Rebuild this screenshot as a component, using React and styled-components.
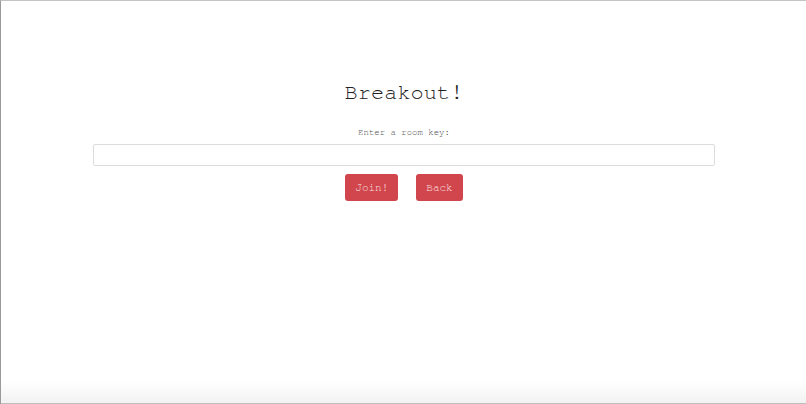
import React from 'react';
import styled, { createGlobalStyle } from 'styled-components';

const GlobalStyle = createGlobalStyle`
  html, body {
    margin: 0;
    padding: 0;
    background: #ffffff;
  }
`;

const Frame = styled.div`
  width: 806px;
  height: 404px;
  box-sizing: border-box;
  border-top: 1px solid #c4c4c4;
  border-left: 1px solid #9a9a9a;
  background: linear-gradient(to bottom, #ffffff 0, #ffffff 380px, #f2f2f2 402px, #8a8a8a 403px);
  display: flex;
  flex-direction: column;
  align-items: center;
  padding: 75px 91px 0 92px;
  font-family: 'Nimbus Mono PS', 'FreeMono', 'Courier New', 'Liberation Mono', monospace;
  overflow: hidden;
`;

const Title = styled.h1`
  margin: 0;
  font-size: 22px;
  font-weight: 400;
  line-height: 32px;
  color: #222222;
`;

const Label = styled.label`
  margin-top: 19px;
  font-size: 9px;
  line-height: 12px;
  color: #555555;
`;

const KeyInput = styled.input`
  margin-top: 5px;
  width: 100%;
  height: 22px;
  box-sizing: border-box;
  border: 1px solid #dddddd;
  border-radius: 2px;
  background: #ffffff;
  padding: 0 6px;
  font-family: inherit;
  font-size: 11px;
  outline: none;
`;

const Actions = styled.div`
  margin-top: 8px;
  display: flex;
  gap: 18px;
`;

const Button = styled.button`
  height: 27px;
  padding: 0 10px;
  border: none;
  border-radius: 3px;
  background: #d1454d;
  color: #fbe0e1;
  font-family: inherit;
  font-size: 11px;
  cursor: pointer;
`;

export default function App() {
  return (
    <>
      <GlobalStyle />
      <Frame>
        <Title>Breakout!</Title>
        <Label htmlFor="room-key">Enter a room key:</Label>
        <KeyInput id="room-key" type="text" />
        <Actions>
          <Button>Join!</Button>
          <Button>Back</Button>
        </Actions>
      </Frame>
    </>
  );
}
